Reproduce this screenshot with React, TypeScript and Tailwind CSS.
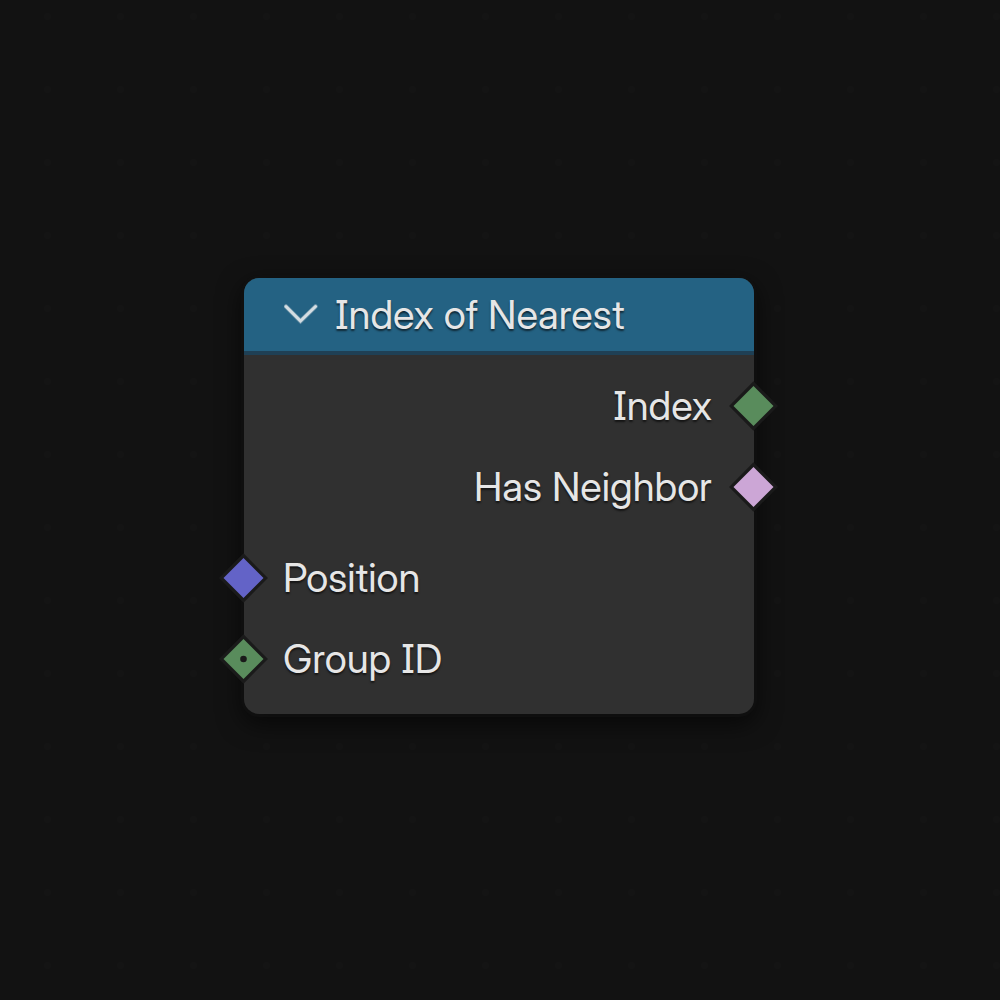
import React, { useState } from "react";

type Socket = {
  id: string;
  label: string;
  side: "in" | "out";
  fill: string;
  dot?: boolean;
};

const outputs: Socket[] = [
  { id: "index", label: "Index", side: "out", fill: "#598c5c" },
  { id: "has-neighbor", label: "Has Neighbor", side: "out", fill: "#cca6d6" },
];

const inputs: Socket[] = [
  { id: "position", label: "Position", side: "in", fill: "#6363c7" },
  { id: "group-id", label: "Group ID", side: "in", fill: "#598c5c", dot: true },
];

function Diamond({ fill, dot }: { fill: string; dot?: boolean }) {
  return (
    <svg width="50" height="50" viewBox="0 0 50 50" aria-hidden="true" className="block">
      <path d="M24.5 .3 49 25 24.5 49.7 0 25Z" fill="#1a1a1a" />
      <path d="M24.5 5 44.5 25 24.5 45 4.5 25Z" fill={fill} />
      {dot && <circle cx="24.5" cy="25" r="3.3" fill="#1a1a1a" />}
    </svg>
  );
}

function SocketRow({ socket }: { socket: Socket }) {
  const out = socket.side === "out";
  return (
    <li className={`relative flex h-[81px] items-center pb-px ${out ? "justify-end pr-[42px]" : "justify-start pl-[39px]"}`}>
      <span>{socket.label}</span>
      <span className={`absolute top-[15px] ${out ? "-right-[25px]" : "-left-[25px]"}`}>
        <Diamond fill={socket.fill} dot={socket.dot} />
      </span>
    </li>
  );
}

export default function App() {
  const [open, setOpen] = useState(true);
  return (
    <main className="flex min-h-screen items-center justify-center bg-[#121212] bg-[radial-gradient(circle_at_center,#141414_3px,transparent_4px)] bg-[length:73px_73px] bg-[position:11px_-20px] pr-[2px] pb-2 font-['Inter_Display','Inter',sans-serif] text-[40px] leading-[48px] text-[#e6e6e6] [font-feature-settings:'cv08'] [text-shadow:0_2px_2px_rgba(0,0,0,0.6)]">
      <section className="w-[510px] rounded-[15px] bg-[#303030] shadow-[0_0_0_3px_rgba(16,16,16,0.8),0_8px_24px_2px_rgba(0,0,0,0.6)]">
        <header className="flex h-[77px] items-center rounded-t-[15px] border-b-4 border-[#1f4055] bg-[#246283] pl-10">
          <button
            type="button"
            aria-label="Toggle node"
            aria-expanded={open}
            onClick={() => setOpen(!open)}
            className="mr-[17px]"
          >
            <svg width="34" height="24" viewBox="0 0 34 24" fill="none" aria-hidden="true" className="block">
              <path d="M2 3.5 16.5 18 31.5 3.5" stroke="#d5dde2" strokeOpacity=".4" strokeWidth="4.5" strokeLinecap="round" />
              <path d="M2 3.5 16.5 18 31.5 3.5" stroke="#d5dde2" strokeWidth="3" strokeLinecap="round" />
            </svg>
          </button>
          <h1>Index of Nearest</h1>
        </header>
        {open && (
          <div className="flex flex-col gap-[10px] pt-[11px] pb-[14px]">
            <ul>
              {outputs.map((s) => (
                <SocketRow key={s.id} socket={s} />
              ))}
            </ul>
            <ul>
              {inputs.map((s) => (
                <SocketRow key={s.id} socket={s} />
              ))}
            </ul>
          </div>
        )}
      </section>
    </main>
  );
}
